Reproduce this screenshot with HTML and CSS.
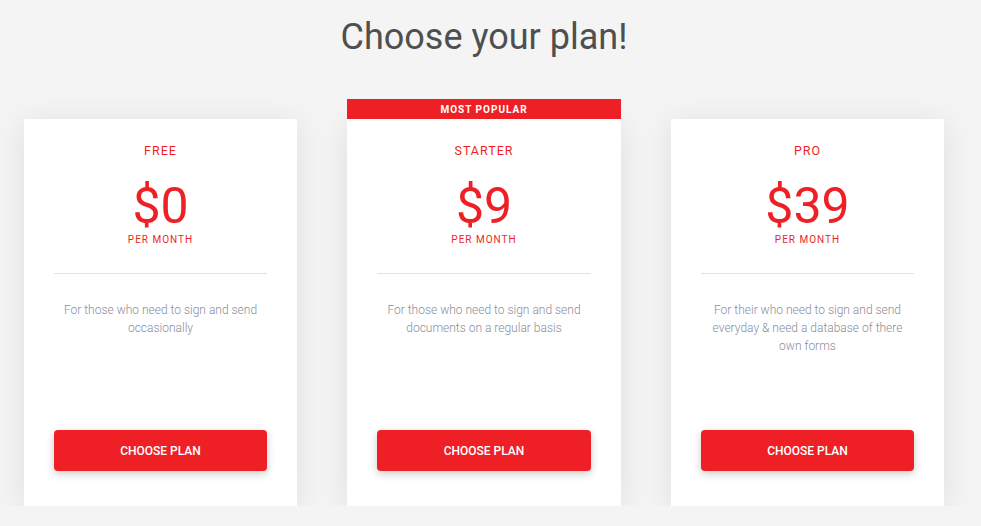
FILE: index.html
```html
<!DOCTYPE html>
<html lang="en">
<head>
    <meta charset="UTF-8">
    <title>Choose your plan</title>
    <link rel="stylesheet" href="styles.css">
</head>
<body>
    <h1 class="title">Choose your plan!</h1>
    <div class="plans">
        <div class="plan">
            <div class="plan-name">FREE</div>
            <div class="plan-price">$0</div>
            <div class="plan-period">PER MONTH</div>
            <hr class="plan-divider">
            <p class="plan-desc">For those who need to sign and send occasionally</p>
            <button class="plan-btn">CHOOSE PLAN</button>
        </div>
        <div class="plan plan-popular">
            <div class="plan-badge">MOST POPULAR</div>
            <div class="plan-name">STARTER</div>
            <div class="plan-price">$9</div>
            <div class="plan-period">PER MONTH</div>
            <hr class="plan-divider">
            <p class="plan-desc">For those who need to sign and send documents on a regular basis</p>
            <button class="plan-btn">CHOOSE PLAN</button>
        </div>
        <div class="plan">
            <div class="plan-name">PRO</div>
            <div class="plan-price">$39</div>
            <div class="plan-period">PER MONTH</div>
            <hr class="plan-divider">
            <p class="plan-desc">For their who need to sign and send everyday &amp; need a database of there own forms</p>
            <button class="plan-btn">CHOOSE PLAN</button>
        </div>
    </div>
</body>
</html>
```

FILE: styles.css
```css
body { margin: 0; background-color: #f4f4f4; font-family: Roboto, "Liberation Sans", sans-serif; overflow: hidden; }
.title { margin: 0; padding: 14px 0 0 0; text-align: center; font-size: 36px; font-weight: 400; line-height: 46px; color: #4f4f4f; width: 968px; }
.plans { display: flex; gap: 50px; padding: 59px 0 0 24px; }
.plan { position: relative; width: 273px; height: 387px; box-sizing: border-box; padding: 24px 30px 35px; background-color: #fff; box-shadow: 0 4px 30px rgba(0,0,0,0.09); display: flex; flex-direction: column; align-items: center; }
.plan-popular { width: 274px; }
.plan-badge { position: absolute; left: 0; right: 0; bottom: 100%; height: 20px; line-height: 21px; background-color: #ee1f25; color: #fff; font-size: 10px; font-weight: 700; letter-spacing: 1px; text-align: center; }
.plan-name { font-size: 12.5px; font-weight: 400; letter-spacing: 1px; color: #ee1f25; line-height: 16px; }
.plan-price { margin-top: 20px; font-size: 50px; line-height: 54px; color: #ee1f25; }
.plan-period { font-size: 10px; letter-spacing: 1px; color: #ee1f25; line-height: 14px; }
.plan-divider { align-self: stretch; margin: 26px 0 0 0; border: 0; border-top: 1px solid #e2e2e2; }
.plan-desc { margin: 27px 0 0 0; font-size: 12px; font-weight: 300; line-height: 18px; color: #8b8d9a; text-align: center; }
.plan-btn { margin-top: auto; align-self: stretch; height: 41px; border: 0; border-radius: 4px; background-color: #ee1f25; color: #fff; font-family: Roboto, "Liberation Sans", sans-serif; font-size: 12px; font-weight: 500; box-shadow: 0 3px 8px rgba(0,0,0,0.2); }
```
